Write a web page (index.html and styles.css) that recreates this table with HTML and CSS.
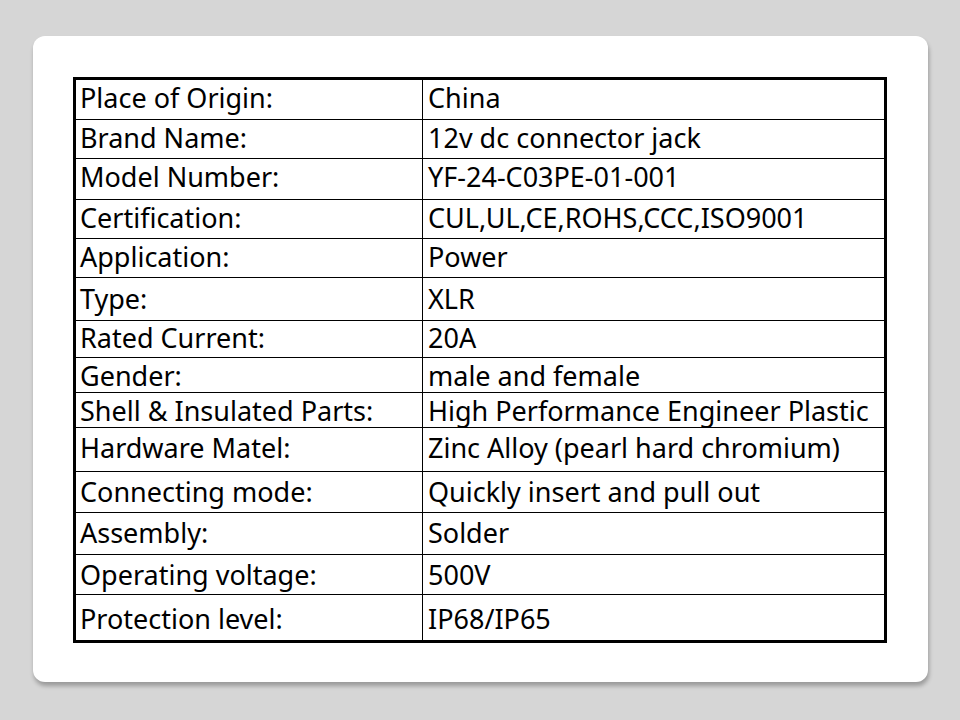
FILE: index.html
```html
<!DOCTYPE html>
<html>
<head>
<meta charset="utf-8">
<link rel="stylesheet" href="styles.css">
</head>
<body>
<div class="card">
<table class="spec">
<tr class="h39"><td>Place of Origin:</td><td>China</td></tr>
<tr class="h39"><td>Brand Name:</td><td>12v dc connector jack</td></tr>
<tr class="h41"><td>Model Number:</td><td>YF-24-C03PE-01-001</td></tr>
<tr class="h39"><td>Certification:</td><td>CUL,UL,CE,ROHS,CCC,ISO9001</td></tr>
<tr class="h39"><td>Application:</td><td>Power</td></tr>
<tr class="h43 low"><td>Type:</td><td>XLR</td></tr>
<tr class="h37 high"><td>Rated Current:</td><td>20A</td></tr>
<tr class="h35 tight"><td>Gender:</td><td>male and female</td></tr>
<tr class="h35 tight"><td>Shell &amp; Insulated Parts:</td><td>High Performance Engineer Plastic</td></tr>
<tr class="h44 mid"><td>Hardware Matel:</td><td>Zinc Alloy (pearl hard chromium)</td></tr>
<tr class="h41 mid"><td>Connecting mode:</td><td>Quickly insert and pull out</td></tr>
<tr class="h42 mid"><td>Assembly:</td><td>Solder</td></tr>
<tr class="h40 mid"><td>Operating voltage:</td><td>500V</td></tr>
<tr class="h46 lower"><td>Protection level:</td><td>IP68/IP65</td></tr>
</table>
</div>
</body>
</html>
```
FILE: styles.css
```css
html, body {
  margin: 0;
  padding: 0;
  background: #d6d6d6;
  width: 960px;
  height: 720px;
  overflow: hidden;
}
.card {
  margin: 36px 0 0 33px;
  width: 895px;
  height: 646px;
  box-sizing: border-box;
  padding: 41px 40px;
  background: #ffffff;
  border-radius: 12px;
  box-shadow: 1px 4px 4px rgba(0, 0, 0, 0.28);
}
.spec {
  border-collapse: separate;
  border-spacing: 0;
  border: 3px solid #000;
  width: 814px;
  font-family: "Noto Sans", "Open Sans", sans-serif;
  font-size: 27px;
  color: #000;
}
.spec td {
  box-sizing: border-box;
  vertical-align: top;
  padding: 0 0 0 4px;
  line-height: 36px;
  white-space: nowrap;
}
.spec td + td {
  border-left: 1px solid #000;
  padding-left: 5px;
}
.spec td:first-child {
  width: 346px;
}
.spec tr + tr td {
  border-top: 1px solid #000;
}
.spec tr td { height: 40px; }
.spec tr.h35 td { height: 35px; }
.spec tr.h37 td { height: 37px; }
.spec tr.h39 td { height: 39px; }
.spec tr.h40 td { height: 40px; }
.spec tr.h41 td { height: 41px; }
.spec tr.h42 td { height: 42px; }
.spec tr.h43 td { height: 43px; }
.spec tr.h44 td { height: 44px; }
.spec tr.h46 td { height: 46px; }
.spec tr.low td { padding-top: 3px; }
.spec tr.mid td { padding-top: 2px; }
.spec tr.lower td { padding-top: 6px; }
.spec tr.high td { line-height: 34px; }
.spec tr.tight td { line-height: 32px; padding-top: 2px; }
```
